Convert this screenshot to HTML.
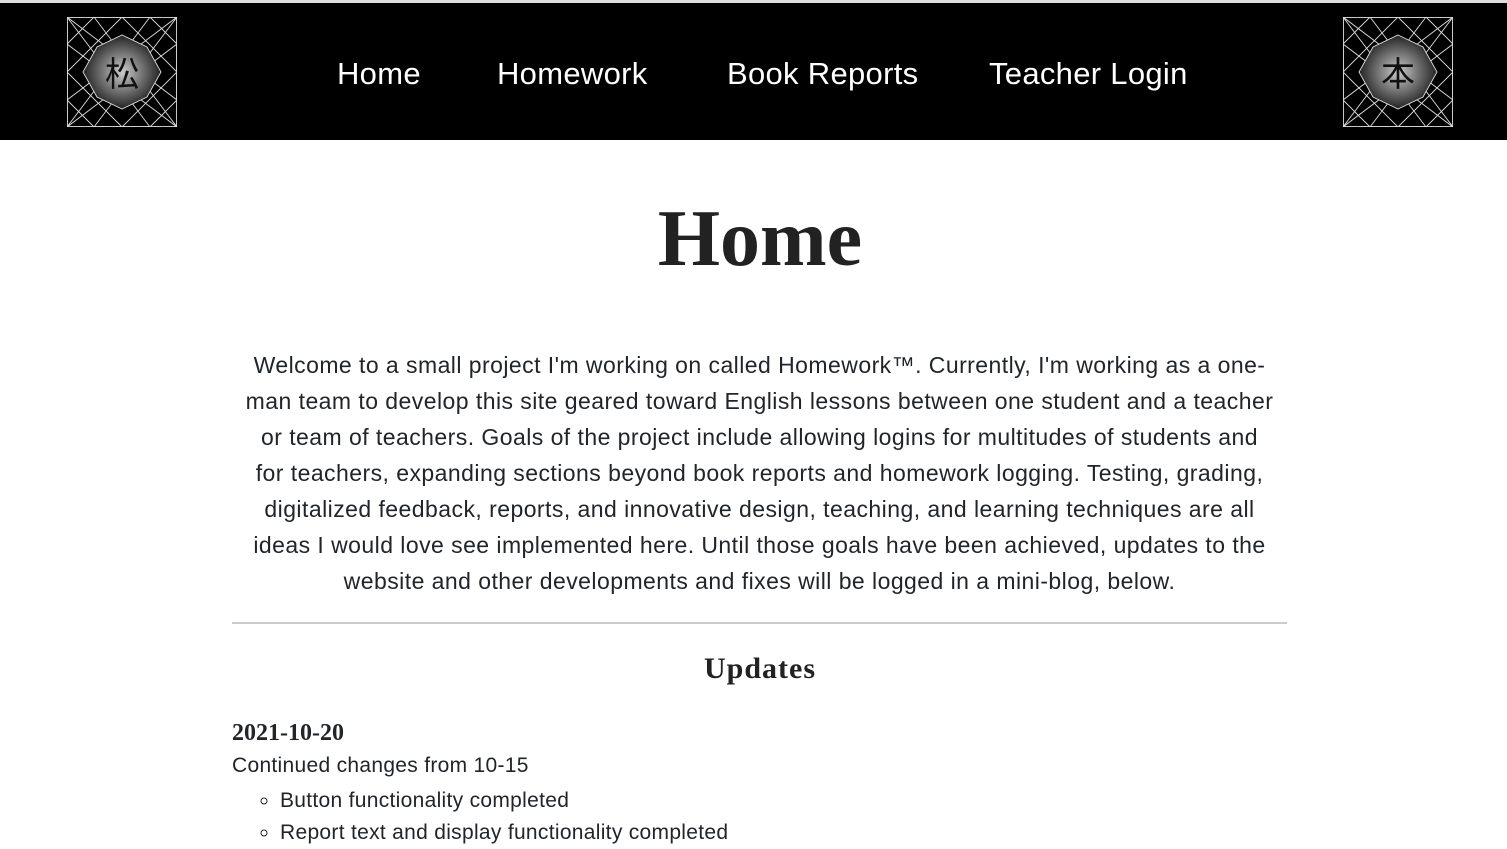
<!DOCTYPE html>
<html><head><meta charset="utf-8"><style>
body{margin:0;background:#fff;font-family:"Liberation Sans",sans-serif;color:#212529;overflow:hidden;width:1507px;height:849px}
.hdr{position:absolute;top:0;left:0;width:1507px;height:140px;background:#000;border-top:3px solid #ddd;box-sizing:border-box}
.logo{position:absolute;top:14px;width:110px;height:110px;background:#000}
.logo svg{position:absolute;left:0;top:0}
.logo span{position:absolute;left:0;top:0;width:110px;line-height:110px;text-align:center;font-size:34px;color:#111;font-family:"Noto Sans CJK JP",sans-serif}
nav a{position:absolute;top:53px;color:#fff;font-size:31px;text-decoration:none;white-space:nowrap;letter-spacing:0.3px}
h1{position:absolute;top:194px;left:0;width:1520px;text-align:center;margin:0;font-family:"Liberation Serif",serif;font-weight:bold;font-size:80px;color:#222}
.p{position:absolute;top:347px;left:245px;width:1029px;text-align:center;font-size:23px;line-height:36px;letter-spacing:0.45px}
hr{position:absolute;top:622px;left:232px;width:1055px;margin:0;border:0;border-top:2px solid #ccc}
h2{position:absolute;top:652px;left:0;width:1520px;text-align:center;margin:0;font-family:"Liberation Serif",serif;font-weight:bold;font-size:30px;color:#222;letter-spacing:1px}
.d{position:absolute;top:720px;left:232px;font-family:"Liberation Serif",serif;font-weight:bold;font-size:24px}
.c{position:absolute;top:754px;left:232px;font-size:21px;letter-spacing:0.3px}
ul{position:absolute;top:785px;left:240px;margin:0;padding-left:40px;list-style:circle;font-size:21px;line-height:32px;letter-spacing:0.3px}
</style></head><body>
<div class="hdr">
<div class="logo" style="left:67px"><svg width="110" height="110" fill="none">
<defs><radialGradient id="g"><stop offset="0" stop-color="#ccc"/><stop offset="1" stop-color="#222"/></radialGradient></defs>
<g stroke="#ddd" stroke-width="0.9">
<rect x="0.5" y="0.5" width="109" height="109"/>
<polygon points="55,0 110,55 55,110 0,55"/>
<polygon points="27,0 83,0 110,27 110,83 83,110 27,110 0,83 0,27"/>
<path d="M0,0L110,83M110,0L0,83M0,110L110,27M110,110L0,27M0,0L83,110M110,0L27,110M0,110L83,0M110,110L27,0"/>
</g>
<polygon points="55,18 80,30 94,55 80,80 55,92 30,80 16,55 30,30" fill="url(#g)" stroke="#ddd" stroke-width="0.9"/>
</svg><span>松</span></div>
<div class="logo" style="left:1343px"><svg width="110" height="110" fill="none">
<defs><radialGradient id="g2"><stop offset="0" stop-color="#ccc"/><stop offset="1" stop-color="#222"/></radialGradient></defs>
<g stroke="#ddd" stroke-width="0.9">
<rect x="0.5" y="0.5" width="109" height="109"/>
<polygon points="55,0 110,55 55,110 0,55"/>
<polygon points="27,0 83,0 110,27 110,83 83,110 27,110 0,83 0,27"/>
<path d="M0,0L110,83M110,0L0,83M0,110L110,27M110,110L0,27M0,0L83,110M110,0L27,110M0,110L83,0M110,110L27,0"/>
</g>
<polygon points="55,18 80,30 94,55 80,80 55,92 30,80 16,55 30,30" fill="url(#g2)" stroke="#ddd" stroke-width="0.9"/>
</svg><span>本</span></div>
<nav><a style="left:337px">Home</a><a style="left:497px">Homework</a><a style="left:727px">Book Reports</a><a style="left:989px">Teacher Login</a></nav>
</div>
<h1>Home</h1>
<div class="p">Welcome to a small project I'm working on called Homework™. Currently, I'm working as a one-man team to develop this site geared toward English lessons between one student and a teacher or team of teachers. Goals of the project include allowing logins for multitudes of students and for teachers, expanding sections beyond book reports and homework logging. Testing, grading, digitalized feedback, reports, and innovative design, teaching, and learning techniques are all ideas I would love see implemented here. Until those goals have been achieved, updates to the website and other developments and fixes will be logged in a mini-blog, below.</div>
<hr>
<h2>Updates</h2>
<div class="d">2021-10-20</div>
<div class="c">Continued changes from 10-15</div>
<ul><li>Button functionality completed</li><li>Report text and display functionality completed</li></ul>
</body></html>
